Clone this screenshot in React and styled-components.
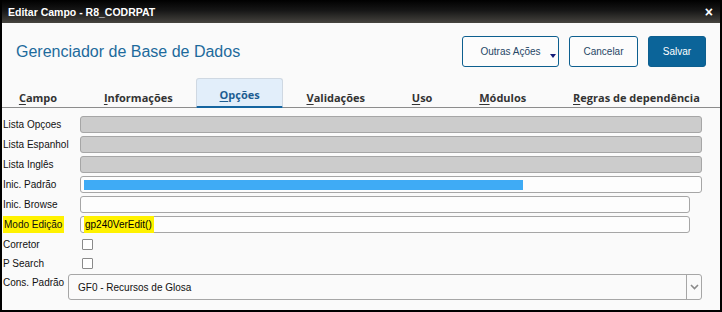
import React from "react";
import styled, { createGlobalStyle } from "styled-components";

const GlobalStyle = createGlobalStyle`
  html, body {
    margin: 0;
    padding: 0;
    background: #fafafa;
  }
  * { box-sizing: border-box; }
`;

const Window = styled.div`
  width: 722px;
  height: 312px;
  display: flex;
  flex-direction: column;
  background: #fafafa;
  border-left: 2px solid #000;
  border-right: 2px solid #000;
  border-bottom: 2px solid #000;
  font-family: "Liberation Sans", Arial, sans-serif;
  overflow: hidden;
`;

const TitleBar = styled.div`
  height: 23px;
  margin: 0 -2px;
  padding: 0 8px;
  display: flex;
  align-items: center;
  justify-content: space-between;
  background: linear-gradient(to bottom, #000 0%, #161616 45%, #46443f 100%);
  color: #fff;
  font-size: 10.5px;
  font-weight: 700;
`;

const Close = styled.span`
  font-size: 14px;
  font-weight: 700;
  line-height: 1;
  margin-right: 1px;
`;

const Header = styled.div`
  display: flex;
  align-items: center;
  justify-content: space-between;
  padding: 13px 14px 0 14px;
`;

const Heading = styled.h1`
  margin: 0;
  font-size: 16px;
  font-weight: 400;
  color: #1d6a9c;
`;

const Actions = styled.div`
  display: flex;
  gap: 10px;
`;

const Button = styled.button`
  position: relative;
  height: 31px;
  width: ${(p) => p.$w}px;
  border: 1px solid #0d5f8f;
  border-radius: 3px;
  background: ${(p) => (p.$primary ? "#0b6499" : "#fcfcfc")};
  color: ${(p) => (p.$primary ? "#fff" : "#274766")};
  font-family: "Liberation Sans", Arial, sans-serif;
  font-size: 10px;
  padding: 0;
`;

const Caret = styled.span`
  position: absolute;
  right: 2px;
  bottom: 8px;
  width: 0;
  height: 0;
  border-left: 3px solid transparent;
  border-right: 3px solid transparent;
  border-top: 4px solid #141c78;
`;

const Tabs = styled.div`
  display: flex;
  align-items: flex-end;
  margin-top: 11px;
  margin-left: -6.5px;
  border-bottom: 1px solid #8c8c8c;
`;

const Tab = styled.div`
  height: 30px;
  padding: ${(p) => (p.$active ? "9px" : "12px")} 22.4px 0;
  font-family: "Open Sans", sans-serif;
  font-size: 11px;
  line-height: 13px;
  font-weight: 700;
  color: ${(p) => (p.$active ? "#1c5d92" : "#333")};
  background: ${(p) => (p.$active ? "#e2eefa" : "transparent")};
  border: 1px solid ${(p) => (p.$active ? "#cfd8e2" : "transparent")};
  border-bottom: 2px solid ${(p) => (p.$active ? "#1565a0" : "transparent")};
  border-radius: 3px 3px 0 0;
  margin-bottom: -1px;
  white-space: nowrap;

  u {
    text-decoration-thickness: 1px;
    text-underline-offset: 2px;
  }
`;

const Form = styled.div`
  display: flex;
  flex-direction: column;
  gap: 3px;
  padding: 8px 18px 0 1px;
`;

const Row = styled.div`
  display: flex;
  align-items: ${(p) => (p.$top ? "flex-start" : "center")};
  height: ${(p) => p.$h || 17}px;
  padding-right: ${(p) => p.$short || 0}px;
`;

const Label = styled.div`
  width: ${(p) => p.$w || 77}px;
  flex-shrink: 0;
  font-size: 10px;
  color: #111;
  padding-top: ${(p) => p.$pt || 0}px;
`;

const Mark = styled.span`
  background: #fff200;
  padding: 3px 2px 3px 1px;
`;

const Input = styled.div`
  flex: 1;
  height: 17px;
  display: flex;
  align-items: center;
  padding: 0 3px;
  border: 1px solid #a6a6a6;
  border-radius: 3px;
  background: ${(p) => (p.$disabled ? "#cccccc" : "#fdfdfd")};
  font-size: 10px;
`;

const Selection = styled.span`
  height: 10px;
  background: #3fabf5;
`;

const Checkbox = styled.span`
  width: 11px;
  height: 11px;
  margin-left: 2px;
  border: 1px solid #8a8a8a;
  border-radius: 1px;
  background: #fff;
`;

const Select = styled.div`
  flex: 1;
  height: 26px;
  display: flex;
  align-items: stretch;
  border: 1px solid #a6a6a6;
  border-radius: 3px;
  background: #fafafa;
`;

const SelectValue = styled.div`
  flex: 1;
  display: flex;
  align-items: center;
  padding-left: 9px;
  font-size: 10px;
  color: #111;
`;

const SelectArrow = styled.div`
  width: 15px;
  display: flex;
  align-items: center;
  justify-content: center;
  border-left: 1px solid #a6a6a6;
`;

const tabs = [
  ["C", "ampo"],
  ["I", "nformações"],
  ["O", "pções", true],
  ["V", "alidações"],
  ["U", "so"],
  ["M", "ódulos"],
  ["R", "egras de dependência"],
];

export default function App() {
  return (
    <>
      <GlobalStyle />
      <Window>
        <TitleBar>
          <span>Editar Campo - R8_CODRPAT</span>
          <Close>×</Close>
        </TitleBar>
        <Header>
          <Heading>Gerenciador de Base de Dados</Heading>
          <Actions>
            <Button $w={97}>
              Outras Ações
              <Caret />
            </Button>
            <Button $w={69}>Cancelar</Button>
            <Button $w={58} $primary>
              Salvar
            </Button>
          </Actions>
        </Header>
        <Tabs>
          {tabs.map(([first, rest, active]) => (
            <Tab key={first + rest} $active={active}>
              <u>{first}</u>
              {rest}
            </Tab>
          ))}
        </Tabs>
        <Form>
          <Row>
            <Label>Lista Opçoes</Label>
            <Input $disabled />
          </Row>
          <Row>
            <Label>Lista Espanhol</Label>
            <Input $disabled />
          </Row>
          <Row>
            <Label>Lista Inglês</Label>
            <Input $disabled />
          </Row>
          <Row>
            <Label>Inic. Padrão</Label>
            <Input>
              <Selection style={{ width: 439 }} />
            </Input>
          </Row>
          <Row $short={12}>
            <Label>Inic. Browse</Label>
            <Input />
          </Row>
          <Row $short={12}>
            <Label>
              <Mark>Modo Edição</Mark>
            </Label>
            <Input>
              <Mark>gp240VerEdit()</Mark>
            </Input>
          </Row>
          <Row $h={16}>
            <Label>Corretor</Label>
            <Checkbox />
          </Row>
          <Row $h={16}>
            <Label>P Search</Label>
            <Checkbox />
          </Row>
          <Row $h={26} $top>
            <Label $w={65} $pt={3}>
              Cons. Padrão
            </Label>
            <Select>
              <SelectValue>GF0 - Recursos de Glosa</SelectValue>
              <SelectArrow>
                <svg width="9" height="6" viewBox="0 0 9 6">
                  <path d="M1 1l3.5 3.5L8 1" fill="none" stroke="#8a8a8a" strokeWidth="1.6" />
                </svg>
              </SelectArrow>
            </Select>
          </Row>
        </Form>
      </Window>
    </>
  );
}
